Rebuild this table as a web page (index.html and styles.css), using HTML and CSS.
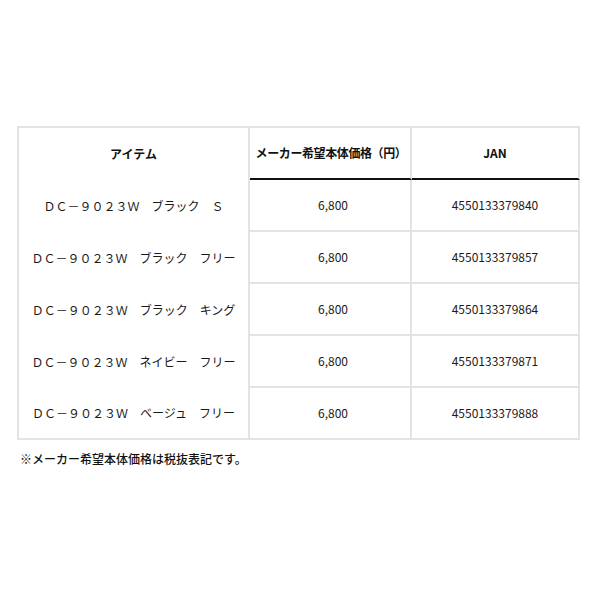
FILE: index.html
```html
<!DOCTYPE html>
<html lang="ja">
<head>
<meta charset="utf-8">
<link rel="stylesheet" href="styles.css">
</head>
<body>
<div class="page">
  <table class="spec">
    <colgroup>
      <col class="w1">
      <col class="w2">
      <col class="w3">
    </colgroup>
    <thead>
      <tr>
        <th class="c1">アイテム</th>
        <th class="c2">メーカー希望本体価格（円）</th>
        <th class="c3">JAN</th>
      </tr>
    </thead>
    <tbody>
      <tr>
        <td class="c1">ＤＣ－９０２３Ｗ　ブラック　Ｓ</td>
        <td class="c2">6,800</td>
        <td class="c3">4550133379840</td>
      </tr>
      <tr>
        <td class="c1">ＤＣ－９０２３Ｗ　ブラック　フリー</td>
        <td class="c2">6,800</td>
        <td class="c3">4550133379857</td>
      </tr>
      <tr>
        <td class="c1">ＤＣ－９０２３Ｗ　ブラック　キング</td>
        <td class="c2">6,800</td>
        <td class="c3">4550133379864</td>
      </tr>
      <tr>
        <td class="c1">ＤＣ－９０２３Ｗ　ネイビー　フリー</td>
        <td class="c2">6,800</td>
        <td class="c3">4550133379871</td>
      </tr>
      <tr class="last">
        <td class="c1">ＤＣ－９０２３Ｗ　ベージュ　フリー</td>
        <td class="c2">6,800</td>
        <td class="c3">4550133379888</td>
      </tr>
    </tbody>
  </table>
  <p class="note">※メーカー希望本体価格は税抜表記です。</p>
</div>
</body>
</html>
```
FILE: styles.css
```css
html, body {
  margin: 0;
  padding: 0;
  background: #fff;
}
body {
  font-family: "Noto Sans CJK JP", "Noto Sans", sans-serif;
  font-size: 12px;
  color: #1a1a1a;
}
.page {
  padding: 126px 0 0 17px;
}
.spec {
  border-collapse: separate;
  border-spacing: 0;
  width: 563px;
  table-layout: fixed;
}
.spec .w1 { width: 233px; }
.spec .w2 { width: 162px; }
.spec .w3 { width: 168px; }
.spec th,
.spec td {
  padding: 0;
  height: 50px;
  line-height: 18px;
  text-align: center;
  vertical-align: middle;
  border: 0 solid #e3e3e3;
  border-right-width: 2px;
}
.spec th {
  font-weight: bold;
  color: #111;
  border-top-width: 2px;
}
.spec th.c2 {
  letter-spacing: -0.4px;
  padding-left: 2px;
}
.spec .c1 {
  border-left-width: 2px;
}
.spec td.c2 {
  padding-left: 6px;
}
.spec th.c2,
.spec th.c3 {
  border-bottom: 2px solid #111;
}
.spec td.c2,
.spec td.c3 {
  border-bottom-width: 2px;
}
.spec tr.last td.c1 {
  border-bottom-width: 2px;
}
.note {
  margin: 10px 0 0 3px;
  line-height: 18px;
  color: #111;
  font-weight: 500;
}
```
